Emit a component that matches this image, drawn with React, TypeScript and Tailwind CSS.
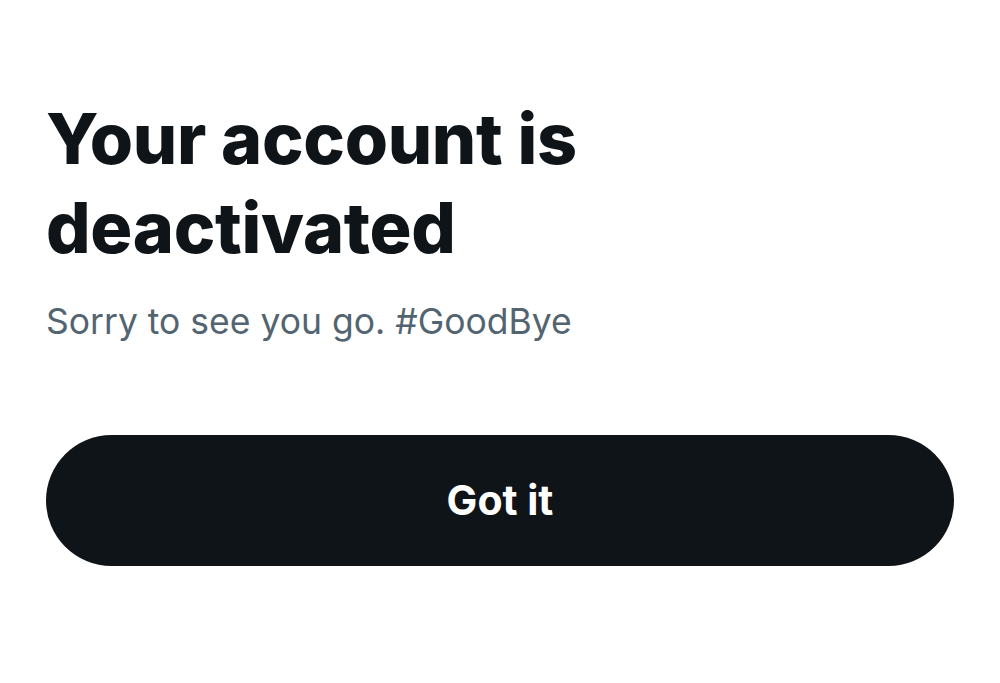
export default function App() {
  return (
    <div className="min-h-screen w-full bg-white px-[46px] pt-[94px]" style={{ fontFamily: 'Inter, "Noto Sans", sans-serif' }}>
      <h1 className="text-[70px] leading-[89px] font-extrabold tracking-[-0.3px] text-[#0f1419]">
        Your account is
        <br />
        deactivated
      </h1>
      <p className="mt-[28px] text-[35.5px] leading-[44px] text-[#536471]">Sorry to see you go. #GoodBye</p>
      <button className="mt-[91px] flex h-[131px] w-full items-center justify-center rounded-full bg-[#0f1419] text-[41px] font-bold text-white">
        Got it
      </button>
    </div>
  )
}
